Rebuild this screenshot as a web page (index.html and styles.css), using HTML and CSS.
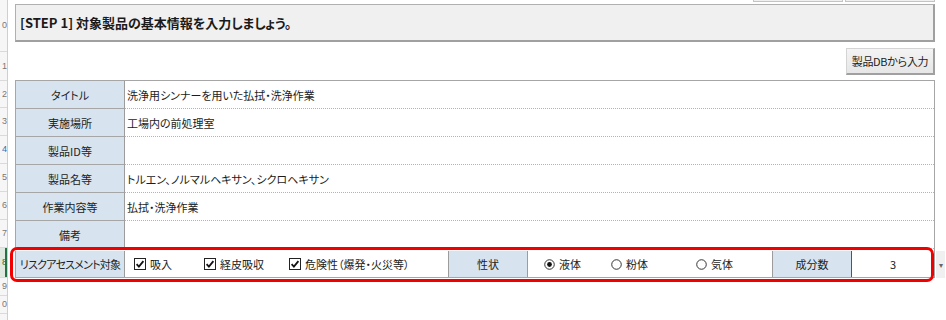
FILE: index.html
```html
<!DOCTYPE html>
<html lang="ja">
<head>
    <meta charset="UTF-8">
    <meta name="viewport" content="width=device-width, initial-scale=1.0">
    <title>STEP 1</title>
    <link rel="stylesheet" href="styles.css">
</head>
<body>
    <div class="sheet">
        <div class="row-heads">
            <div class="rh" style="height: 52px">0</div>
            <div class="rh" style="height: 29px">1</div>
            <div class="rh" style="height: 27px">2</div>
            <div class="rh" style="height: 28px">3</div>
            <div class="rh blue" style="height: 28px">4</div>
            <div class="rh" style="height: 28px">5</div>
            <div class="rh" style="height: 28px">6</div>
            <div class="rh" style="height: 28px">7</div>
            <div class="rh selected" style="height: 30px">8</div>
            <div class="rh" style="height: 18px">9</div>
            <div class="rh" style="height: 18px">0</div>
        </div>

        <div class="main">
            <div class="top-tabs">
                <span></span>
                <span></span>
            </div>

            <div class="step-header">[STEP 1] 対象製品の基本情報を入力しましょう。</div>

            <div class="tools">
                <button class="db-button">製品DBから入力</button>
            </div>

            <div class="info">
                <div class="info-row">
                    <div class="label">タイトル</div>
                    <div class="value">洗浄用シンナーを用いた払拭・洗浄作業</div>
                </div>
                <div class="info-row">
                    <div class="label">実施場所</div>
                    <div class="value">工場内の前処理室</div>
                </div>
                <div class="info-row">
                    <div class="label">製品ID等</div>
                    <div class="value"></div>
                </div>
                <div class="info-row">
                    <div class="label">製品名等</div>
                    <div class="value">トルエン、ノルマルヘキサン、シクロヘキサン</div>
                </div>
                <div class="info-row">
                    <div class="label">作業内容等</div>
                    <div class="value">払拭・洗浄作業</div>
                </div>
                <div class="info-row">
                    <div class="label">備考</div>
                    <div class="value"></div>
                </div>

                <div class="risk-row">
                    <div class="label risk-label">リスクアセスメント対象</div>
                    <div class="checks">
                        <label class="opt w70">
                            <svg class="box" viewBox="0 0 12 12"><rect x="0.5" y="0.5" width="11" height="11" fill="#fff" stroke="#222"/><path d="M2.6 6.2 L4.9 8.6 L9.4 3.2" fill="none" stroke="#111" stroke-width="1.8"/></svg>
                            吸入
                        </label>
                        <label class="opt w85">
                            <svg class="box" viewBox="0 0 12 12"><rect x="0.5" y="0.5" width="11" height="11" fill="#fff" stroke="#222"/><path d="M2.6 6.2 L4.9 8.6 L9.4 3.2" fill="none" stroke="#111" stroke-width="1.8"/></svg>
                            経皮吸収
                        </label>
                        <label class="opt">
                            <svg class="box" viewBox="0 0 12 12"><rect x="0.5" y="0.5" width="11" height="11" fill="#fff" stroke="#222"/><path d="M2.6 6.2 L4.9 8.6 L9.4 3.2" fill="none" stroke="#111" stroke-width="1.8"/></svg>
                            危険性（爆発・火災等）
                        </label>
                    </div>
                    <div class="label state-label">性状</div>
                    <div class="radios">
                        <label class="opt w67">
                            <svg class="radio" viewBox="0 0 12 12"><circle cx="6" cy="6" r="5.2" fill="#fff" stroke="#222"/><circle cx="6" cy="6" r="2.6" fill="#111"/></svg>
                            液体
                        </label>
                        <label class="opt w85">
                            <svg class="radio" viewBox="0 0 12 12"><circle cx="6" cy="6" r="5.2" fill="#fff" stroke="#222"/></svg>
                            粉体
                        </label>
                        <label class="opt">
                            <svg class="radio" viewBox="0 0 12 12"><circle cx="6" cy="6" r="5.2" fill="#fff" stroke="#222"/></svg>
                            気体
                        </label>
                    </div>
                    <div class="label count-label">成分数</div>
                    <div class="count">3</div>

                    <div class="highlight"></div>
                    <div class="dropdown">&#9662;</div>
                </div>
            </div>
        </div>
    </div>
</body>
</html>
```

FILE: styles.css
```css
* {
    margin: 0;
    padding: 0;
    box-sizing: border-box;
}

body {
    background: #fff;
    font-family: "Noto Sans CJK JP", "Noto Sans", sans-serif;
    font-feature-settings: "palt";
    color: #1c1c1c;
    font-size: 11px;
    overflow: hidden;
}

.sheet {
    display: flex;
    height: 320px;
}

/* excel row headers, mostly out of view on the left */
.row-heads {
    width: 8px;
    flex-shrink: 0;
    background: #f6f6f6;
    border-right: 1px solid #cfcfcf;
    overflow: hidden;
}

.rh {
    display: flex;
    align-items: center;
    justify-content: flex-end;
    border-bottom: 1px solid #dadada;
    font-family: "Liberation Sans", sans-serif;
    font-size: 9px;
    line-height: 1;
    color: #777;
}

.rh.blue {
    color: #2f6fb8;
}

.rh.selected {
    background: #dfe9df;
    color: #217346;
    box-shadow: inset -2px 0 0 #217346;
}

.main {
    width: 920px;
    margin-left: 7px;
}

.top-tabs {
    display: flex;
    justify-content: flex-end;
    gap: 2px;
    height: 2px;
}

.top-tabs span {
    width: 90px;
    border: 1px solid #c4c4c4;
    border-top: none;
    background: #f0f0f0;
}

.step-header {
    margin-top: 2px;
    height: 38px;
    background: #f0f0f0;
    border: 1px solid #b0b0b0;
    border-right: 2px solid #a0a0a0;
    border-bottom: 2px solid #a0a0a0;
    padding: 0 4px;
    display: flex;
    align-items: center;
    font-size: 13px;
    font-weight: bold;
    color: #1a1a1a;
    white-space: nowrap;
}

.tools {
    display: flex;
    justify-content: flex-end;
    padding-top: 6px;
}

.db-button {
    width: 89px;
    height: 27px;
    padding: 0;
    background: linear-gradient(#f4f4f4, #e6e6e6);
    border: 1px solid #d4d4d4;
    border-right: 2px solid #a0a0a0;
    border-bottom: 2px solid #a0a0a0;
    font-family: inherit;
    font-feature-settings: "palt";
    font-size: 11px;
    letter-spacing: -0.3px;
    white-space: nowrap;
    color: #222;
}

.info {
    margin-top: 5px;
    border-top: 1px solid #a6a6a6;
    border-right: 1px solid #a6a6a6;
}

.info-row {
    display: flex;
    height: 28px;
}

.label {
    width: 110px;
    flex-shrink: 0;
    background: #d7e4ef;
    border-left: 1px solid #a6a6a6;
    border-right: 1px solid #9c9c9c;
    border-bottom: 1px solid #a6a6a6;
    display: flex;
    align-items: center;
    justify-content: center;
    white-space: nowrap;
    font-size: 11px;
    color: #222;
}

.value {
    flex: 1;
    border-bottom: 1px dotted #b4b4b4;
    display: flex;
    align-items: center;
    padding-left: 2px;
    font-size: 11px;
}

.risk-row {
    position: relative;
    display: flex;
    height: 27px;
    margin-top: 2px;
    border-bottom: 1px solid #a6a6a6;
}

.risk-label {
    border-bottom: none;
    letter-spacing: -0.8px;
}

.checks {
    width: 323px;
    display: flex;
    align-items: center;
    padding-left: 9px;
}

.radios {
    width: 244px;
    display: flex;
    align-items: center;
    padding-left: 16px;
}

.opt {
    display: flex;
    align-items: center;
    gap: 4px;
    white-space: nowrap;
    font-size: 11px;
}

.w67 {
    width: 67px;
}

.w70 {
    width: 70px;
}

.w85 {
    width: 85px;
}

.box {
    width: 12px;
    height: 12px;
    flex-shrink: 0;
}

.radio {
    width: 11px;
    height: 11px;
    flex-shrink: 0;
}

.state-label,
.count-label {
    width: 80px;
    border-bottom: none;
    border-left-color: #9c9c9c;
}

.count-label {
    border-right: 1px solid #217346;
}

.count {
    flex: 1;
    display: flex;
    align-items: center;
    justify-content: center;
    font-size: 11px;
}

/* red annotation frame around the last row */
.highlight {
    position: absolute;
    left: -5px;
    right: 0;
    top: -4px;
    bottom: -5px;
    border: 3px solid #f20000;
    border-radius: 7px;
    pointer-events: none;
}

.dropdown {
    position: absolute;
    right: -11px;
    top: 0;
    width: 9px;
    height: 27px;
    background: #f0f0f0;
    display: flex;
    align-items: center;
    justify-content: center;
    font-size: 8px;
    color: #666;
}
```
